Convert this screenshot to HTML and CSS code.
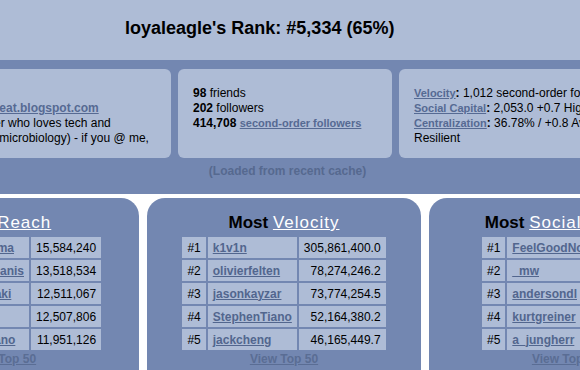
FILE: index.html
```html
<!DOCTYPE html>
<html lang="en">
<head>
    <meta charset="UTF-8">
    <title>loyaleagle's Rank</title>
    <link rel="stylesheet" href="styles.css">
</head>
<body>
    <!-- Rank header -->
    <div class="rank-bar">
        <h1>loyaleagle's Rank: #5,334 (65%)</h1>
    </div>

    <div class="page">
        <!-- Profile stats -->
        <section class="stats">
            <div class="cards">
                <div class="card">
                    USA<br>
                    <a class="site" href="#">loyaleat.blogspot.com</a><br>
                    Coder who loves tech and<br>
                    (and microbiology) - if you @ me,
                </div>
                <div class="card">
                    <b>98</b> friends<br>
                    <b>202</b> followers<br>
                    <b>414,708</b> <a href="#">second-order followers</a>
                </div>
                <div class="card nowrap">
                    <a href="#">Velocity</a><b>:</b> 1,012 second-order followers/day<br>
                    <a href="#">Social Capital</a><b>:</b> 2,053.0 +0.7 High<br>
                    <a href="#">Centralization</a><b>:</b> 36.78% / +0.8 Average,<br>
                    Resilient
                </div>
            </div>
            <p class="cache-note">(Loaded from recent cache)</p>
        </section>

        <!-- Top 5 boards -->
        <section class="boards">
            <div class="board">
                <h2>Most <a href="#">Reach</a></h2>
                <table>
                    <tr><td>#1</td><td><a href="#">BarackObama</a></td><td class="score">15,584,240</td></tr>
                    <tr><td>#2</td><td><a href="#">JasonCalacanis</a></td><td class="score">13,518,534</td></tr>
                    <tr><td>#3</td><td><a href="#">GuyKawasaki</a></td><td class="score">12,511,067</td></tr>
                    <tr><td>#4</td><td><a href="#">Scobleizer</a></td><td class="score">12,507,806</td></tr>
                    <tr><td>#5</td><td><a href="#">alyssa_milano</a></td><td class="score">11,951,126</td></tr>
                </table>
                <a class="view-all" href="#">View Top 50</a>
            </div>
            <div class="board">
                <h2>Most <a href="#">Velocity</a></h2>
                <table>
                    <tr><td>#1</td><td><a href="#">k1v1n</a></td><td class="score">305,861,400.0</td></tr>
                    <tr><td>#2</td><td><a href="#">olivierfelten</a></td><td class="score">78,274,246.2</td></tr>
                    <tr><td>#3</td><td><a href="#">jasonkayzar</a></td><td class="score">73,774,254.5</td></tr>
                    <tr><td>#4</td><td><a href="#">StephenTiano</a></td><td class="score">52,164,380.2</td></tr>
                    <tr><td>#5</td><td><a href="#">jackcheng</a></td><td class="score">46,165,449.7</td></tr>
                </table>
                <a class="view-all" href="#">View Top 50</a>
            </div>
            <div class="board">
                <h2>Most <a href="#">Social Capital</a></h2>
                <table>
                    <tr><td>#1</td><td><a href="#">FeelGoodNow</a></td><td class="score">4,215.3</td></tr>
                    <tr><td>#2</td><td><a href="#">_mw</a></td><td class="score">3,982.6</td></tr>
                    <tr><td>#3</td><td><a href="#">andersondl</a></td><td class="score">3,540.1</td></tr>
                    <tr><td>#4</td><td><a href="#">kurtgreiner</a></td><td class="score">3,317.9</td></tr>
                    <tr><td>#5</td><td><a href="#">a_jungherr</a></td><td class="score">3,102.4</td></tr>
                </table>
                <a class="view-all" href="#">View Top 50</a>
            </div>
        </section>
    </div>
</body>
</html>
```

FILE: styles.css
```css
body {
    margin: 0;
    font-family: "Liberation Sans", Arial, sans-serif;
    background-color: #fff;
    color: #000;
    overflow: hidden;
}

.rank-bar {
    height: 60px;
    display: flex;
    align-items: center;
    background-color: #aebcd6;
}

.rank-bar h1 {
    margin: 0 0 4px 125px;
    font-size: 18px;
}

.page {
    width: 1000px;
    margin-left: -216px;
}

.stats {
    background-color: #7387b1;
    padding: 9px 0 15px;
}

.cards {
    display: flex;
    justify-content: center;
    gap: 7px;
    padding-left: 2px;
}

.card {
    flex: none;
    box-sizing: border-box;
    width: 214px;
    height: 89px;
    padding: 17px 15px 0;
    background-color: #aebcd6;
    border-radius: 6px;
    font-size: 12px;
    line-height: 15px;
}

.card a {
    color: #566a93;
    font-weight: bold;
    font-size: 11px;
}

.card a.site {
    font-size: 12px;
}

.nowrap {
    white-space: nowrap;
}

.cache-note {
    margin: 6px 0 0;
    padding-left: 7px;
    text-align: center;
    font-size: 12px;
    font-weight: bold;
    line-height: 15px;
    color: #56698f;
}

.boards {
    display: flex;
    justify-content: center;
    gap: 8px;
    padding-top: 4px;
    background-color: #fff;
}

.board {
    flex: none;
    width: 274px;
    height: 200px;
    padding-top: 14px;
    background-color: #7387b1;
    border-radius: 18px 18px 0 0;
    text-align: center;
}

.board h2 {
    margin: 0 0 1px;
    font-size: 17px;
    line-height: 22px;
}

.board h2 a {
    color: #fff;
    font-weight: normal;
    letter-spacing: 1px;
}

.board table {
    margin: 0 auto;
    border-spacing: 2px;
    font-size: 12px;
}

.board td {
    height: 21px;
    padding: 0 5px;
    background-color: #aebcd6;
    text-align: left;
}

.board td.score {
    text-align: right;
}

.board td a {
    color: #52668e;
    font-weight: bold;
}

.view-all {
    display: block;
    font-size: 12px;
    font-weight: bold;
    line-height: 15px;
    color: #5a6d94;
}
```
